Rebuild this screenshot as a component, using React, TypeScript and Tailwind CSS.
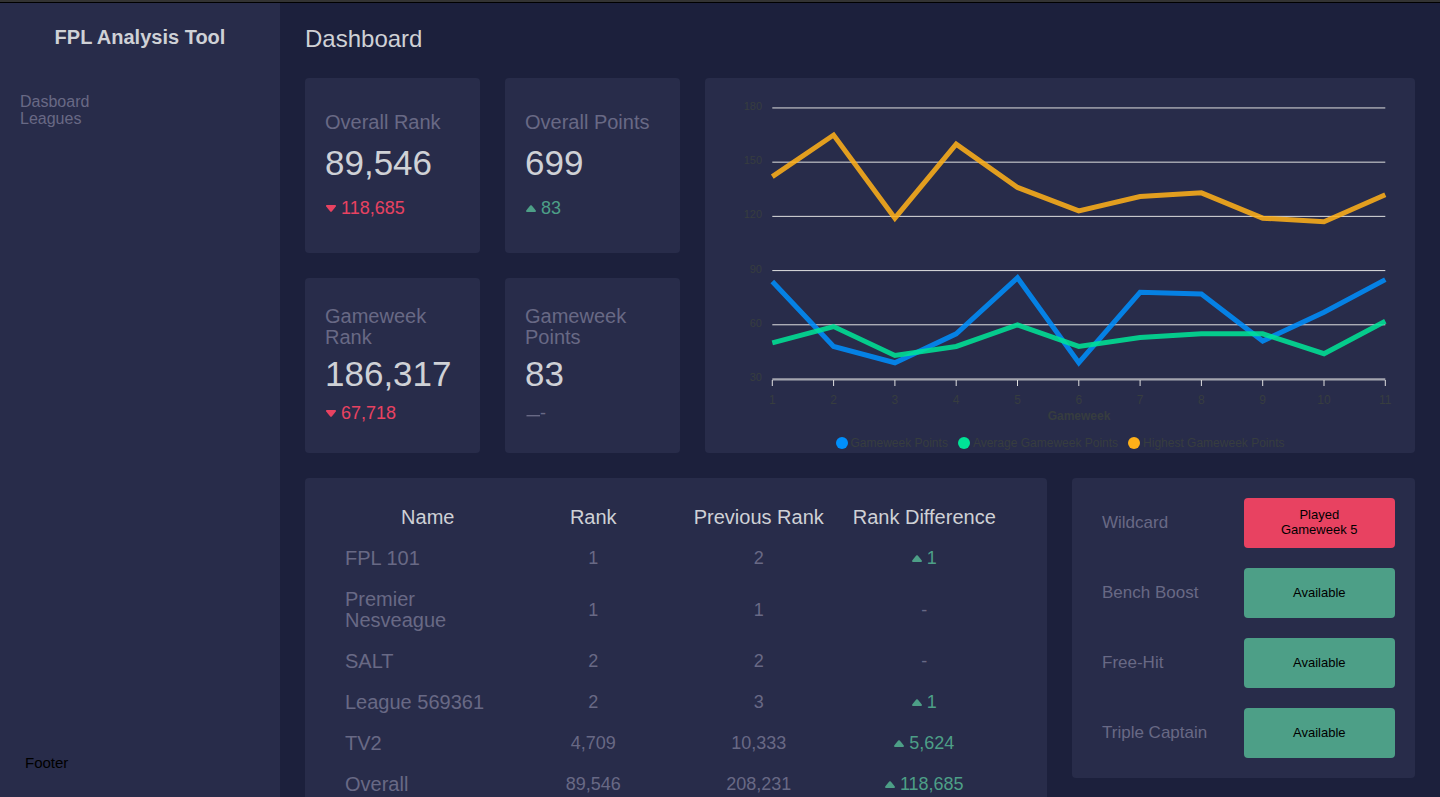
import type { ReactNode } from "react";

type Trend = "up" | "down" | "none";

function Caret({ trend }: { trend: Trend }) {
  return (
    <svg viewBox="0 0 10 7" className="h-[7px] w-[10px] shrink-0 fill-current" aria-hidden="true">
      {trend === "up" ? (
        <path d="M0.7 7 Q-0.3 6.6 0.2 5.4 L4.2 0.6 Q5 -0.2 5.8 0.6 L9.8 5.4 Q10.3 6.6 9.3 7 Z" />
      ) : (
        <path d="M0.7 0 Q-0.3 0.4 0.2 1.6 L4.2 6.4 Q5 7.2 5.8 6.4 L9.8 1.6 Q10.3 0.4 9.3 0 Z" />
      )}
    </svg>
  );
}

function Dash() {
  return (
    <svg viewBox="0 0 14 7" className="h-[7px] w-[14px] shrink-0 fill-current" aria-hidden="true">
      <rect x="0.5" y="5" width="13.5" height="1.4" />
    </svg>
  );
}

function Card({ className, children }: { className: string; children: ReactNode }) {
  return <section className={`rounded bg-[#282c4a] ${className}`}>{children}</section>;
}

type Stat = { label: string; value: string; change: string; trend: Trend };

const stats: Stat[] = [
  { label: "Overall Rank", value: "89,546", change: "118,685", trend: "down" },
  { label: "Overall Points", value: "699", change: "83", trend: "up" },
  { label: "Gameweek Rank", value: "186,317", change: "67,718", trend: "down" },
  { label: "Gameweek Points", value: "83", change: "-", trend: "none" },
];

const trendColor: Record<Trend, string> = {
  up: "text-[#4d9f87]",
  down: "text-[#e84261]",
  none: "text-[#686985]",
};

function StatCard({ label, value, change, trend }: Stat) {
  return (
    <Card className="flex h-[175px] flex-col justify-evenly px-5 pt-[19px] pb-5">
      <h2 className="text-xl leading-[21px] text-[#686985]">{label}</h2>
      <p className="mb-1 text-[35px] leading-8 text-[#cfd1d6]">{value}</p>
      <p
        className={`flex items-center pl-px text-lg leading-[21px] ${trend === "none" ? "" : "gap-[5px]"} ${trendColor[trend]}`}
      >
        {trend === "none" ? <Dash /> : <Caret trend={trend} />}
        <span>{change}</span>
      </p>
    </Card>
  );
}

const series = [
  { name: "Gameweek Points", color: "#008ffb", dot: "bg-[#008ffb]", values: [84, 48, 39, 55, 86, 39, 78, 77, 51, 67, 85] },
  { name: "Average Gameweek Points", color: "#00e396", dot: "bg-[#00e396]", values: [50, 59, 43, 48, 60, 48, 53, 55, 55, 44, 62] },
  { name: "Highest Gameweek Points", color: "#feb019", dot: "bg-[#feb019]", values: [142, 165, 119, 160, 136, 123, 131, 133, 119, 117, 132] },
];

const LEFT = 67.3;
const RIGHT = 680.3;
const BOTTOM = 301;
const xAt = (i: number) => LEFT + (i * (RIGHT - LEFT)) / 10;
const yAt = (v: number) => BOTTOM - (v - 30) * 1.807;

function PointsChart() {
  return (
    <Card className="col-span-2 row-span-2 overflow-hidden">
      <svg viewBox="0 0 710 355" className="block w-full" role="img" aria-label="Points per gameweek">
        {[180, 150, 120, 90, 60, 30].map((v) => (
          <g key={v}>
            <line x1={LEFT} x2={RIGHT} y1={yAt(v)} y2={yAt(v)} stroke="#e0e0e0" />
            <text x="57" y={yAt(v) + 2} textAnchor="end" fontSize="11" fill="#373d3f">
              {v}
            </text>
          </g>
        ))}
        <line x1={LEFT} x2={RIGHT} y1={BOTTOM + 1} y2={BOTTOM + 1} stroke="#e0e0e0" strokeOpacity="0.7" />
        {series[0].values.map((_, i) => (
          <g key={i}>
            <line x1={xAt(i)} x2={xAt(i)} y1={BOTTOM + 1} y2={BOTTOM + 7} stroke="#e0e0e0" />
            <text x={xAt(i)} y="326" textAnchor="middle" fontSize="12" fill="#373d3f">
              {i + 1}
            </text>
          </g>
        ))}
        <text x="374" y="342" textAnchor="middle" fontSize="12" fontWeight="700" fill="#373d3f">
          Gameweek
        </text>
        {series.map((s) => (
          <polyline
            key={s.name}
            points={s.values.map((v, i) => `${xAt(i)},${yAt(v)}`).join(" ")}
            fill="none"
            stroke={s.color}
            strokeWidth="5"
            strokeOpacity="0.87"
          />
        ))}
      </svg>
      <ul className="flex justify-center gap-2.5 text-xs leading-5 text-[#373d3f]">
        {series.map((s) => (
          <li key={s.name} className="flex items-center gap-[3px]">
            <span className={`size-3 rounded-full ${s.dot}`} />
            {s.name}
          </li>
        ))}
      </ul>
    </Card>
  );
}

const leagues: { name: string; rank: string; previous: string; diff: string; trend: Trend }[] = [
  { name: "FPL 101", rank: "1", previous: "2", diff: "1", trend: "up" },
  { name: "Premier Nesveague", rank: "1", previous: "1", diff: "-", trend: "none" },
  { name: "SALT", rank: "2", previous: "2", diff: "-", trend: "none" },
  { name: "League 569361", rank: "2", previous: "3", diff: "1", trend: "up" },
  { name: "TV2", rank: "4,709", previous: "10,333", diff: "5,624", trend: "up" },
  { name: "Overall", rank: "89,546", previous: "208,231", diff: "118,685", trend: "up" },
];

function LeagueTable() {
  return (
    <Card className="min-w-0 grow px-10 pt-[19px] pb-5">
      <table className="w-full table-fixed text-center text-lg leading-[21px] text-[#686985]">
        <thead>
          <tr className="text-xl leading-[21px] text-[#cfd1d6]">
            {["Name", "Rank", "Previous Rank", "Rank Difference"].map((h) => (
              <th key={h} scope="col" className="py-2.5 font-normal whitespace-nowrap">
                {h}
              </th>
            ))}
          </tr>
        </thead>
        <tbody>
          {leagues.map((l) => (
            <tr key={l.name}>
              <td className="py-2.5 text-left text-xl leading-[21px]">{l.name}</td>
              <td className="py-2.5">{l.rank}</td>
              <td className="py-2.5">{l.previous}</td>
              <td className={`py-2.5 ${trendColor[l.trend]}`}>
                <div className="flex items-center justify-center gap-[5px]">
                  {l.trend !== "none" && <Caret trend={l.trend} />}
                  <span>{l.diff}</span>
                </div>
              </td>
            </tr>
          ))}
        </tbody>
      </table>
    </Card>
  );
}

const chips = [
  { name: "Wildcard", played: "Gameweek 5" },
  { name: "Bench Boost", played: null },
  { name: "Free-Hit", played: null },
  { name: "Triple Captain", played: null },
];

function Chips() {
  return (
    <Card className="flex w-[343px] shrink-0 flex-col gap-5 self-start p-5">
      {chips.map((c) => (
        <div key={c.name} className="grid h-[50px] grid-cols-2 items-center">
          <span className="pl-2.5 text-[17px] leading-5 text-[#686985]">{c.name}</span>
          <div
            className={`flex h-full flex-col items-center justify-center rounded pb-0.5 text-[13px] leading-[15px] text-black ${c.played ? "bg-[#e84261]" : "bg-[#4d9f87]"}`}
          >
            {c.played ? (
              <>
                <span>Played</span>
                <span>{c.played}</span>
              </>
            ) : (
              <span>Available</span>
            )}
          </div>
        </div>
      ))}
    </Card>
  );
}

export default function App() {
  return (
    <div className="flex h-screen flex-col overflow-hidden bg-[#1c203c] font-['Liberation_Sans',Arial,sans-serif]">
      <div className="h-[3px] shrink-0 border-b border-black bg-[#333333]" />
      <div className="flex min-h-0 grow">
        <aside className="flex w-[280px] shrink-0 flex-col bg-[#282c4a]">
          <div className="pt-[23px] text-center text-xl leading-[23px] font-bold text-[#cfd1d6]">FPL Analysis Tool</div>
          <nav className="mt-11 flex flex-col items-start px-5 text-base leading-[17px] text-[#686985]">
            <a href="#dashboard">Dasboard</a>
            <a href="#leagues">Leagues</a>
          </nav>
          <footer className="mt-auto px-[25px] pb-[25px] text-[15px] leading-[18px] text-black">Footer</footer>
        </aside>
        <main className="min-w-0 grow px-[25px] pt-[21px]">
          <h1 className="text-2xl leading-[29px] text-[#cfd1d6]">Dashboard</h1>
          <div className="mt-[25px] grid grid-cols-[175px_175px_1fr_1fr] gap-[25px]">
            <StatCard {...stats[0]} />
            <StatCard {...stats[1]} />
            <PointsChart />
            <StatCard {...stats[2]} />
            <StatCard {...stats[3]} />
          </div>
          <div className="mt-[25px] flex gap-[25px]">
            <LeagueTable />
            <Chips />
          </div>
        </main>
      </div>
    </div>
  );
}
